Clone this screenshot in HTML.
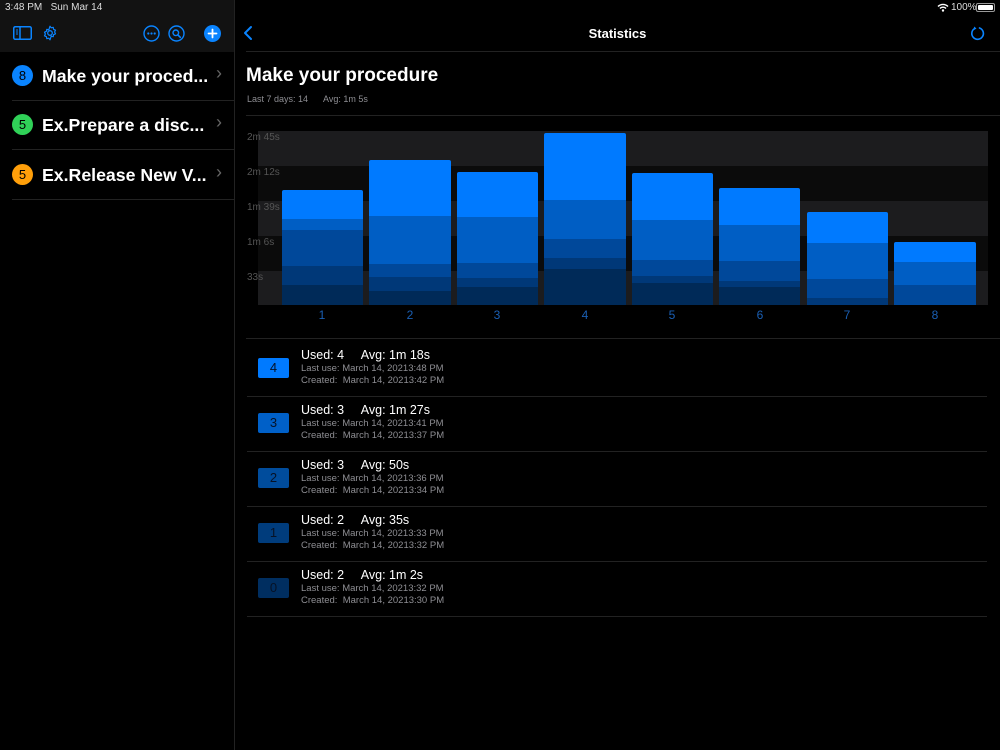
<!DOCTYPE html>
<html><head><meta charset="utf-8"><style>
*{margin:0;padding:0;box-sizing:border-box}
body{width:1000px;height:750px;background:#000;font-family:"Liberation Sans",sans-serif;color:#fff;position:relative;overflow:hidden}
.a{position:absolute}
.seg{position:absolute}
.row{position:absolute;left:12px;width:222px;height:50px;border-bottom:1px solid #222}
.row .b{position:absolute;left:0;top:14px;width:21px;height:21px;border-radius:50%;color:#000;font-size:13px;text-align:center;line-height:21px}
.row .t{position:absolute;left:30px;top:15px;font-size:17.7px;font-weight:bold;white-space:nowrap}
.row .c{position:absolute;left:204px;top:12px;color:#666;font-size:18px}
.yl{position:absolute;left:247px;font-size:10px;color:#555}
.xl{position:absolute;top:308px;font-size:12px;color:#1a5fb4;width:20px;text-align:center}
.it{position:absolute;left:247px;width:740px;height:55px;border-bottom:1px solid #222}
.it .bd{position:absolute;left:11px;top:16px;width:31px;height:20px;border-radius:2px;color:#061226;font-size:13px;text-align:center;line-height:20px}
.it .h{position:absolute;left:54px;top:6px;font-size:12.5px;white-space:pre}
.it .s{position:absolute;left:54px;font-size:9.5px;color:#8e8e93;white-space:pre}
</style></head><body>
<div class="a" style="left:0;top:0;width:234px;height:52px;background:#121212"></div>
<div class="a" style="left:234px;top:0;width:1px;height:750px;background:#222"></div>
<div class="a" style="left:5px;top:2px;font-size:10px;color:#ddd">3:48 PM&nbsp;&nbsp;&nbsp;Sun Mar 14</div>
<div class="a" style="left:951px;top:2px;font-size:10px;color:#ddd">100%</div>
<svg class="a" style="left:937px;top:3px" width="12" height="9" viewBox="0 0 12 9"><path d="M1 3.5a7 7 0 0 1 10 0M3 5.5a4 4 0 0 1 6 0" stroke="#fff" stroke-width="1.4" fill="none"/><circle cx="6" cy="7.5" r="1.2" fill="#fff"/></svg>
<div class="a" style="left:976px;top:3px;width:19px;height:9px;border:1px solid #999;border-radius:2px;padding:1px"><div style="width:100%;height:100%;background:#fff;border-radius:1px"></div></div>
<svg class="a" style="left:13px;top:26px" width="19" height="14" viewBox="0 0 19 14"><rect x=".75" y=".75" width="17.5" height="12.5" rx="1.5" stroke="#0a84ff" stroke-width="1.5" fill="none"/><line x1="7" y1="1" x2="7" y2="13" stroke="#0a84ff" stroke-width="1.5"/><path d="M3 4h2M3 6h2M3 8h2" stroke="#0a84ff"/></svg>
<svg class="a" style="left:42px;top:25px" width="16" height="16" viewBox="0 0 16 16"><circle cx="8" cy="8" r="2.3" stroke="#0a84ff" stroke-width="1.3" fill="none"/><path d="M8 1.2l1.2 1.6 2-.5.4 2 1.9.9-.9 1.8.9 1.8-1.9.9-.4 2-2-.5L8 14.8l-1.2-1.6-2 .5-.4-2-1.9-.9.9-1.8-.9-1.8 1.9-.9.4-2 2 .5z" stroke="#0a84ff" stroke-width="1.2" fill="none" stroke-linejoin="round"/></svg>
<svg class="a" style="left:143px;top:25px" width="17" height="17" viewBox="0 0 17 17"><circle cx="8.5" cy="8.5" r="7.5" stroke="#0a84ff" stroke-width="1.4" fill="none"/><circle cx="5.3" cy="8.5" r="1.1" fill="#0a84ff"/><circle cx="8.5" cy="8.5" r="1.1" fill="#0a84ff"/><circle cx="11.7" cy="8.5" r="1.1" fill="#0a84ff"/></svg>
<svg class="a" style="left:168px;top:25px" width="17" height="17" viewBox="0 0 17 17"><circle cx="8.5" cy="8.5" r="7.5" stroke="#0a84ff" stroke-width="1.4" fill="none"/><circle cx="7.8" cy="7.8" r="2.8" stroke="#0a84ff" stroke-width="1.4" fill="none"/><path d="M9.9 9.9l2.4 2.4" stroke="#0a84ff" stroke-width="1.6" stroke-linecap="round"/></svg>
<svg class="a" style="left:204px;top:25px" width="17" height="17" viewBox="0 0 17 17"><circle cx="8.5" cy="8.5" r="8.5" fill="#0a84ff"/><path d="M8.5 4.5v8M4.5 8.5h8" stroke="#fff" stroke-width="1.8" stroke-linecap="round"/></svg>
<div class="row" style="top:51px"><div class="b" style="background:#0a84ff">8</div><div class="t">Make your proced...</div><div class="c">›</div></div>
<div class="row" style="top:100px"><div class="b" style="background:#30d158">5</div><div class="t">Ex.Prepare a disc...</div><div class="c">›</div></div>
<div class="row" style="top:150px"><div class="b" style="background:#ff9f0a">5</div><div class="t">Ex.Release New V...</div><div class="c">›</div></div>
<svg class="a" style="left:243px;top:25px" width="10" height="16" viewBox="0 0 10 16"><path d="M8 2L2 8l6 6" stroke="#0a84ff" stroke-width="2" fill="none" stroke-linecap="round" stroke-linejoin="round"/></svg>
<div class="a" style="left:560px;top:26px;width:115px;text-align:center;font-size:13px;font-weight:bold">Statistics</div>
<svg class="a" style="left:970px;top:26px" width="15" height="15" viewBox="0 0 15 15"><path d="M5 2.3A5.8 5.8 0 1 0 9.5 2" stroke="#0a84ff" stroke-width="1.6" fill="none" stroke-linecap="round"/><path d="M4 0.5l2.5 2-2.7 1.6z" fill="#0a84ff"/></svg>
<div class="a" style="left:246px;top:51px;width:754px;height:1px;background:#222"></div>
<div class="a" style="left:246px;top:65px;font-size:19px;font-weight:bold">Make your procedure</div>
<div class="a" style="left:247px;top:94px;font-size:9px;color:#8e8e93">Last 7 days: 14&nbsp;&nbsp;&nbsp;&nbsp;&nbsp;&nbsp;Avg: 1m 5s</div>
<div class="a" style="left:246px;top:115px;width:754px;height:1px;background:#222"></div>
<div class="a" style="left:258px;top:131px;width:730px;height:35px;background:#1c1c1e"></div>
<div class="a" style="left:258px;top:166px;width:730px;height:35px;background:#0b0b0b"></div>
<div class="a" style="left:258px;top:201px;width:730px;height:35px;background:#1c1c1e"></div>
<div class="a" style="left:258px;top:236px;width:730px;height:35px;background:#0b0b0b"></div>
<div class="a" style="left:258px;top:271px;width:730px;height:34px;background:#1c1c1e"></div>
<div class="yl" style="top:132px">2m 45s</div>
<div class="yl" style="top:167px">2m 12s</div>
<div class="yl" style="top:202px">1m 39s</div>
<div class="yl" style="top:237px">1m 6s</div>
<div class="yl" style="top:272px">33s</div>
<div class="seg" style="left:282px;width:81px;top:190px;height:29px;background:#007aff;border-radius:2px 2px 0 0"></div>
<div class="seg" style="left:282px;width:81px;top:219px;height:11px;background:#005ec4"></div>
<div class="seg" style="left:282px;width:81px;top:230px;height:36px;background:#00489a"></div>
<div class="seg" style="left:282px;width:81px;top:266px;height:19px;background:#003878"></div>
<div class="seg" style="left:282px;width:81px;top:285px;height:20px;background:#002a58"></div>
<div class="seg" style="left:369px;width:82px;top:160px;height:56px;background:#007aff;border-radius:2px 2px 0 0"></div>
<div class="seg" style="left:369px;width:82px;top:216px;height:48px;background:#005ec4"></div>
<div class="seg" style="left:369px;width:82px;top:264px;height:13px;background:#00489a"></div>
<div class="seg" style="left:369px;width:82px;top:277px;height:14px;background:#003878"></div>
<div class="seg" style="left:369px;width:82px;top:291px;height:14px;background:#002a58"></div>
<div class="seg" style="left:457px;width:81px;top:172px;height:45px;background:#007aff;border-radius:2px 2px 0 0"></div>
<div class="seg" style="left:457px;width:81px;top:217px;height:46px;background:#005ec4"></div>
<div class="seg" style="left:457px;width:81px;top:263px;height:15px;background:#00489a"></div>
<div class="seg" style="left:457px;width:81px;top:278px;height:9px;background:#003878"></div>
<div class="seg" style="left:457px;width:81px;top:287px;height:18px;background:#002a58"></div>
<div class="seg" style="left:544px;width:82px;top:133px;height:67px;background:#007aff;border-radius:2px 2px 0 0"></div>
<div class="seg" style="left:544px;width:82px;top:200px;height:39px;background:#005ec4"></div>
<div class="seg" style="left:544px;width:82px;top:239px;height:19px;background:#00489a"></div>
<div class="seg" style="left:544px;width:82px;top:258px;height:11px;background:#003878"></div>
<div class="seg" style="left:544px;width:82px;top:269px;height:36px;background:#002a58"></div>
<div class="seg" style="left:632px;width:81px;top:173px;height:47px;background:#007aff;border-radius:2px 2px 0 0"></div>
<div class="seg" style="left:632px;width:81px;top:220px;height:40px;background:#005ec4"></div>
<div class="seg" style="left:632px;width:81px;top:260px;height:16px;background:#00489a"></div>
<div class="seg" style="left:632px;width:81px;top:276px;height:7px;background:#003878"></div>
<div class="seg" style="left:632px;width:81px;top:283px;height:22px;background:#002a58"></div>
<div class="seg" style="left:719px;width:81px;top:188px;height:37px;background:#007aff;border-radius:2px 2px 0 0"></div>
<div class="seg" style="left:719px;width:81px;top:225px;height:36px;background:#005ec4"></div>
<div class="seg" style="left:719px;width:81px;top:261px;height:20px;background:#00489a"></div>
<div class="seg" style="left:719px;width:81px;top:281px;height:6px;background:#003878"></div>
<div class="seg" style="left:719px;width:81px;top:287px;height:18px;background:#002a58"></div>
<div class="seg" style="left:807px;width:81px;top:212px;height:31px;background:#007aff;border-radius:2px 2px 0 0"></div>
<div class="seg" style="left:807px;width:81px;top:243px;height:36px;background:#005ec4"></div>
<div class="seg" style="left:807px;width:81px;top:279px;height:19px;background:#00489a"></div>
<div class="seg" style="left:807px;width:81px;top:298px;height:7px;background:#003878"></div>
<div class="seg" style="left:894px;width:82px;top:242px;height:20px;background:#007aff;border-radius:2px 2px 0 0"></div>
<div class="seg" style="left:894px;width:82px;top:262px;height:23px;background:#005ec4"></div>
<div class="seg" style="left:894px;width:82px;top:285px;height:20px;background:#00489a"></div>
<div class="xl" style="left:312px">1</div>
<div class="xl" style="left:400px">2</div>
<div class="xl" style="left:487px">3</div>
<div class="xl" style="left:575px">4</div>
<div class="xl" style="left:662px">5</div>
<div class="xl" style="left:750px">6</div>
<div class="xl" style="left:837px">7</div>
<div class="xl" style="left:925px">8</div>
<div class="a" style="left:246px;top:338px;width:754px;height:1px;background:#222"></div>
<div class="it" style="top:342px"><div class="bd" style="background:#007aff">4</div><div class="h">Used: 4     Avg: 1m 18s</div><div class="s" style="top:21px">Last use: March 14, 20213:48 PM</div><div class="s" style="top:33px">Created:  March 14, 20213:42 PM</div></div>
<div class="it" style="top:397px"><div class="bd" style="background:#0060c8">3</div><div class="h">Used: 3     Avg: 1m 27s</div><div class="s" style="top:21px">Last use: March 14, 20213:41 PM</div><div class="s" style="top:33px">Created:  March 14, 20213:37 PM</div></div>
<div class="it" style="top:452px"><div class="bd" style="background:#004c9c">2</div><div class="h">Used: 3     Avg: 50s</div><div class="s" style="top:21px">Last use: March 14, 20213:36 PM</div><div class="s" style="top:33px">Created:  March 14, 20213:34 PM</div></div>
<div class="it" style="top:507px"><div class="bd" style="background:#003c7c">1</div><div class="h">Used: 2     Avg: 35s</div><div class="s" style="top:21px">Last use: March 14, 20213:33 PM</div><div class="s" style="top:33px">Created:  March 14, 20213:32 PM</div></div>
<div class="it" style="top:562px"><div class="bd" style="background:#002e60">0</div><div class="h">Used: 2     Avg: 1m 2s</div><div class="s" style="top:21px">Last use: March 14, 20213:32 PM</div><div class="s" style="top:33px">Created:  March 14, 20213:30 PM</div></div>
</body></html>
